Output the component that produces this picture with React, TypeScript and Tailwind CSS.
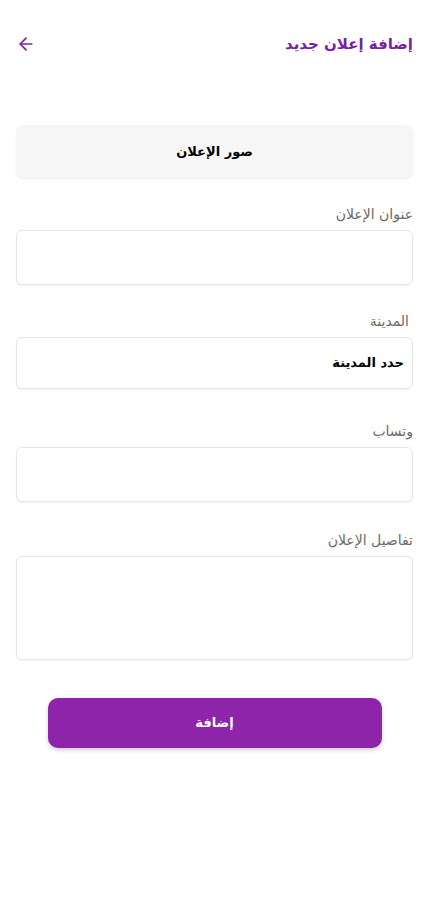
import { ArrowLeft } from 'lucide-react';

const font = { fontFamily: '"DejaVu Sans", "Noto Sans", sans-serif' };

function Field({
  label,
  tall,
  value,
  inset,
  className = '',
}: {
  label: string;
  tall?: boolean;
  value?: string;
  inset?: boolean;
  className?: string;
}) {
  return (
    <div className={`flex flex-col ${className}`}>
      <label className={`text-[14px] leading-[20px] text-[#6b6b6b] mb-[6px] ${inset ? 'pr-[4px]' : ''}`}>{label}</label>
      <div
        className={`rounded-[6px] border border-[#e6e6e6] bg-white shadow-[0_1px_2px_rgba(0,0,0,0.06)] flex items-center px-[8px] ${
          tall ? 'h-[104px]' : value ? 'h-[52px]' : 'h-[55px]'
        }`}
      >
        {value && <span className="text-[13px] font-bold text-black">{value}</span>}
      </div>
    </div>
  );
}

export default function App() {
  return (
    <div dir="rtl" style={font} className="w-[429px] h-[900px] bg-white">
      {/* Header */}
      <header className="h-[88px] flex items-center justify-between px-[16px]">
        <h1 className="text-[15px] font-bold text-[#7b1fa2]">إضافة إعلان جديد</h1>
        <ArrowLeft className="w-[20px] h-[20px] text-[#7b1fa2]" strokeWidth={2} />
      </header>

      <div className="px-[16px] pt-[37px] flex flex-col">
        {/* Photos */}
        <div className="h-[53px] rounded-[8px] bg-[#f6f6f6] shadow-[0_1px_2px_rgba(0,0,0,0.08)] flex items-center justify-center mb-[26px]">
          <span className="text-[13px] font-bold text-black">صور الإعلان</span>
        </div>

        <Field label="عنوان الإعلان" />
        <Field label="المدينة" value="حدد المدينة" inset className="mt-[26px]" />
        <Field label="وتساب" className="mt-[32px]" />
        <Field label="تفاصيل الإعلان" tall className="mt-[28px]" />

        {/* Submit */}
        <div className="flex justify-center pt-[38px]">
          <button className="w-[334px] h-[50px] rounded-[10px] bg-[#8e24aa] shadow-[0_2px_4px_rgba(0,0,0,0.2)] text-white text-[13px] font-bold">
            إضافة
          </button>
        </div>
      </div>
    </div>
  );
}
